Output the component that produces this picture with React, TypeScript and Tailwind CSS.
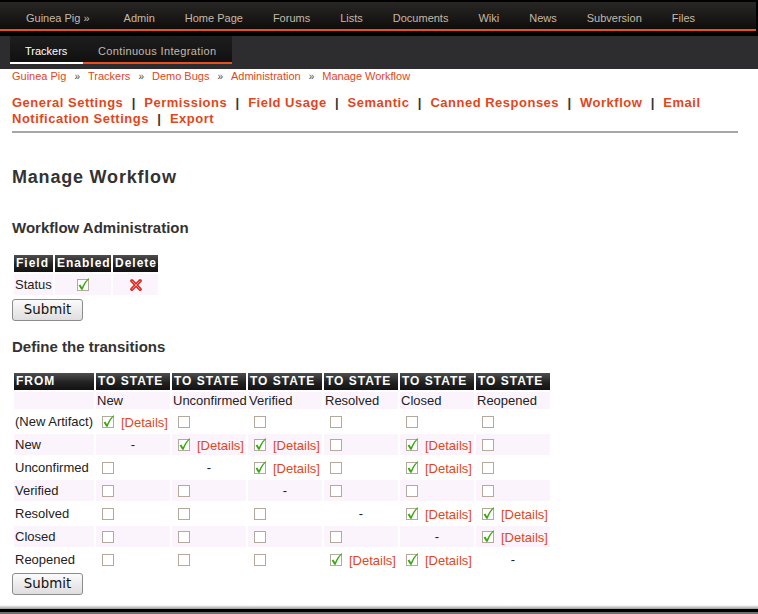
import React from "react";

type C = "-" | "c" | "e";

const states = ["New", "Unconfirmed", "Verified", "Resolved", "Closed", "Reopened"];
const rows: { label: string; cells: C[] }[] = [
  { label: "(New Artifact)", cells: ["c", "e", "e", "e", "e", "e"] },
  { label: "New", cells: ["-", "c", "c", "e", "c", "e"] },
  { label: "Unconfirmed", cells: ["e", "-", "c", "e", "c", "e"] },
  { label: "Verified", cells: ["e", "e", "-", "e", "e", "e"] },
  { label: "Resolved", cells: ["e", "e", "e", "-", "c", "c"] },
  { label: "Closed", cells: ["e", "e", "e", "e", "-", "c"] },
  { label: "Reopened", cells: ["e", "e", "e", "c", "c", "-"] },
];

function Box({ checked }: { checked?: boolean }) {
  return (
    <svg width="14" height="14" viewBox="0 0 14 14" className="block shrink-0 overflow-visible">
      <rect x="1.5" y="1.5" width="11" height="11" fill="#fff" stroke="#b5a99d" />
      {checked && (
        <path
          d="M2.6 7.4 L4.4 6.4 L6 9.2 C7.6 5.6 9.6 2.8 12.6 0.2 L13.2 1.1 C10.6 3.6 8.3 7.3 6.7 11.8 L5.3 11.8 Z"
          fill="#3aa912"
        />
      )}
    </svg>
  );
}

function RedX() {
  return (
    <svg width="14" height="14" viewBox="0 0 14 14" className="block">
      <path d="M2.8 2.8 L11.2 11.2 M11.2 2.8 L2.8 11.2" stroke="#d9302a" strokeWidth="3.4" strokeLinecap="round" />
      <path d="M3.4 3.4 L10.6 10.6 M10.6 3.4 L3.4 10.6" stroke="#ff8a80" strokeWidth="1" strokeLinecap="round" />
    </svg>
  );
}

const thCls =
  "h-[17px] p-0 pl-[2px] text-left align-middle whitespace-nowrap text-white font-bold text-[12px] tracking-[1px] leading-[17px] bg-[linear-gradient(to_bottom,#4e4e4e,#222222_55%,#121212)]";

function SubmitBtn({ top }: { top: string }) {
  return (
    <button
      className={`block ${top} w-[71px] h-[22px] border border-[#8c8c8c] rounded-[3px] bg-[linear-gradient(to_bottom,#fbfbfb,#dedede)] text-[13.33px] text-[#111] font-['DejaVu_Sans',sans-serif] leading-[18px]`}
    >
      Submit
    </button>
  );
}

function Cell({ c, pink }: { c: C; pink: boolean }) {
  const bg = pink ? "bg-[#fcf4fc]" : "";
  if (c === "-")
    return <td className={`h-[21px] p-0 text-center align-middle ${bg}`}>-</td>;
  return (
    <td className={`h-[21px] p-0 pl-[5px] align-middle ${bg}`}>
      <div className="flex items-center">
        <Box checked={c === "c"} />
        {c === "c" && <span className="ml-[6px] mt-[2px] text-[#e2461c] whitespace-nowrap">[Details]</span>}
      </div>
    </td>
  );
}

const nav = ["Guinea Pig »", "Admin", "Home Page", "Forums", "Lists", "Documents", "Wiki", "News", "Subversion", "Files"];
const crumbs = ["Guinea Pig", "Trackers", "Demo Bugs", "Administration", "Manage Workflow"];
const links = ["General Settings", "Permissions", "Field Usage", "Semantic", "Canned Responses", "Workflow", "Email Notification Settings", "Export"];

export default function App() {
  return (
    <div className="w-[758px] h-[614px] bg-white font-['Liberation_Sans',Arial,sans-serif] overflow-hidden">
      {/* top bar */}
      <div className="h-[36px] bg-black pt-[2px]">
        <div className="h-[29px] mr-[2px] border-b-2 border-[#e8501e] bg-[linear-gradient(to_bottom,#292725,#0e0d0c)] flex gap-[30px] pl-[26px] pt-[9px]">
          {nav.map((n, i) => (
            <span
              key={n}
              className={`text-[11px] leading-[14px] text-[#c6b9a8] whitespace-nowrap ${i === 0 ? "mr-[4px]" : ""}`}
            >
              {n}
            </span>
          ))}
        </div>
      </div>
      {/* sub bar */}
      <div className="h-[33px] bg-[#2d2d2f] pl-[10px]">
        <div className="flex h-[28px] bg-[linear-gradient(to_bottom,#1e1e1e,#0f0f0f)] w-[222px]">
          <div className="w-[73px] pl-[15px] pt-[8px] border-b-2 border-white text-white text-[11px] leading-[14px] whitespace-nowrap">
            Trackers
          </div>
          <div className="w-[149px] pl-[15px] pt-[8px] border-b-2 border-[#e8501e] text-[#c6b9a8] text-[11px] leading-[14px] tracking-[0.35px] whitespace-nowrap">
            Continuous Integration
          </div>
        </div>
      </div>
      {/* content */}
      <div className="pl-[12px] pr-[20px]">
        <div className="pt-[1px] text-[11px] leading-[13px] flex">
          {crumbs.map((c, i) => (
            <React.Fragment key={c}>
              {i > 0 && <span className="mx-[8px] text-[#444] text-[10px]">»</span>}
              <span className="text-[#e2461c]">{c}</span>
            </React.Fragment>
          ))}
        </div>
        <div className="mt-[12px] text-[13px] leading-[16px] font-bold tracking-[0.5px]">
          {links.map((l, i) => (
            <React.Fragment key={l}>
              {i > 0 && <span className="inline-block w-[21px] text-center text-[#333]">|</span>}
              <span className="text-[#e2461c]">{l}</span>
            </React.Fragment>
          ))}
        </div>
        <div className="mt-[4px] h-[2px] bg-[#a6a6a6]" />
        <h2 className="mt-[34px] text-[18px] leading-[21px] font-bold tracking-[0.8px] text-[#333]">Manage Workflow</h2>
        <h3 className="mt-[31px] text-[15px] leading-[18px] font-bold text-[#333]">Workflow Administration</h3>
        <table className="mt-[16px] table-fixed border-separate [border-spacing:2px] w-[148px] text-[13px] leading-[15px] text-[#222]">
          <thead>
            <tr>
              <th className={`${thCls} w-[39px]`}>Field</th>
              <th className={`${thCls} w-[56px]`}>Enabled</th>
              <th className={`${thCls} w-[45px]`}>Delete</th>
            </tr>
          </thead>
          <tbody>
            <tr>
              <td className="h-[21px] p-0 pl-[1px] align-middle bg-[#fcf4fc]">Status</td>
              <td className="h-[21px] p-0 align-middle bg-[#fcf4fc]">
                <div className="flex justify-center">
                  <Box checked />
                </div>
              </td>
              <td className="h-[21px] p-0 align-middle bg-[#fcf4fc]">
                <div className="flex justify-center">
                  <RedX />
                </div>
              </td>
            </tr>
          </tbody>
        </table>
        <SubmitBtn top="mt-[2px]" />
        <h3 className="mt-[17px] text-[15px] leading-[18px] font-bold text-[#333]">Define the transitions</h3>
        <table className="mt-[15px] table-fixed border-separate [border-spacing:2px] w-[540px] text-[13px] leading-[15px] text-[#222]">
          <thead>
            <tr>
              <th className={`${thCls} w-[80px]`}>FROM</th>
              {states.map((s) => (
                <th key={s} className={`${thCls} w-[74px]`}>
                  TO STATE
                </th>
              ))}
            </tr>
          </thead>
          <tbody>
            <tr>
              <td className="h-[17px] p-0 bg-[#fcf4fc]" />
              {states.map((s) => (
                <td key={s} className="h-[17px] p-0 pl-[1px] align-middle bg-[#fcf4fc] whitespace-nowrap">
                  {s}
                </td>
              ))}
            </tr>
            {rows.map((r, i) => {
              const pink = i % 2 === 1;
              return (
                <tr key={r.label}>
                  <td className={`h-[21px] p-0 pl-[1px] align-middle whitespace-nowrap ${pink ? "bg-[#fcf4fc]" : ""}`}>{r.label}</td>
                  {r.cells.map((c, j) => (
                    <Cell key={j} c={c} pink={pink} />
                  ))}
                </tr>
              );
            })}
          </tbody>
        </table>
        <SubmitBtn top="mt-[1px]" />
      </div>
      {/* footer */}
      <div className="mt-[10px]">
        <div className="h-[4px] bg-[linear-gradient(to_bottom,#ffffff,#9a9a9a)]" />
        <div className="h-[3px] bg-black" />
        <div className="h-[10px] bg-[#6e6e6e]" />
      </div>
    </div>
  );
}
